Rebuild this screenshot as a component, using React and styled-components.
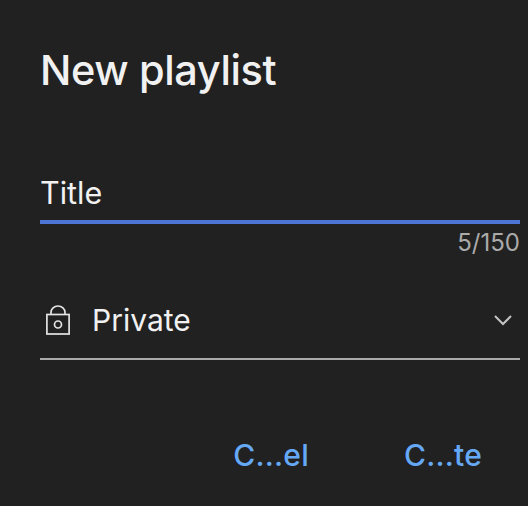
import React from 'react';
import styled, { createGlobalStyle } from 'styled-components';

const GlobalStyle = createGlobalStyle`
  html, body {
    margin: 0;
    padding: 0;
    background: #212121;
  }
`

const Dialog = styled.div`
  width: 528px;
  height: 506px;
  box-sizing: border-box;
  padding: 44px 8px 0 40px;
  background: #212121;
  font-family: Inter, "Liberation Sans", sans-serif;
  color: #f1f1f1;
  overflow: hidden;
`

const Heading = styled.h1`
  margin: 0;
  font-size: 41.500px;
  line-height: 52px;
  font-weight: 500;
  letter-spacing: -0.4px;
`

const TitleField = styled.div`
  margin-top: 76px;
  height: 40px;
  padding-bottom: 8px;
  display: flex;
  align-items: center;
  border-bottom: 4px solid #4c75d6;
  font-size: 30.500px;
`

const Counter = styled.div`
  margin-top: 4px;
  text-align: right;
  font-size: 24px;
  line-height: 30px;
  color: #aaaaaa;
`

const Select = styled.div`
  margin-top: 24px;
  height: 76px;
  display: flex;
  align-items: center;
  gap: 23px;
  padding: 0 8px 0 6px;
  border-bottom: 2px solid #aaaaaa;
  font-size: 30px;
`

const SelectLabel = styled.span`
  flex: 1;
  margin-left: -1px;
`

const Actions = styled.div`
  margin-top: 77px;
  display: flex;
  justify-content: flex-end;
  gap: 95px;
  padding-right: 38px;
`

const ActionButton = styled.button`
  padding: 0;
  border: 0;
  background: none;
  font-family: inherit;
  font-size: 30px;
  line-height: 36px;
  font-weight: 500;
  letter-spacing: 0.2px;
  color: #65a8f5;
`

const LockIcon = () => (
  <svg width="24" height="30" viewBox="0 0 24 30" fill="none" stroke="#e4e4e4" strokeWidth="1.700">
    <rect x="0.900" y="9.500" width="22.200" height="19.500" />
    <path d="M5 9.500V7.500a7 6.500 0 0 1 14 0v2" />
    <circle cx="12" cy="19.500" r="3.500" />
  </svg>
)

const ChevronIcon = () => (
  <svg width="18" height="11" viewBox="0 0 18 11" fill="none" stroke="#c4c4c4" strokeWidth="2">
    <path d="M1 1l8 8 8-8" />
  </svg>
)

const App = () => {
  return (
    <Dialog>
      <GlobalStyle />
      <Heading>New playlist</Heading>
      <TitleField>Title</TitleField>
      <Counter>5/150</Counter>
      <Select>
        <LockIcon />
        <SelectLabel>Private</SelectLabel>
        <ChevronIcon />
      </Select>
      <Actions>
        <ActionButton>C...el</ActionButton>
        <ActionButton>C...te</ActionButton>
      </Actions>
    </Dialog>
  )
}

export default App;
